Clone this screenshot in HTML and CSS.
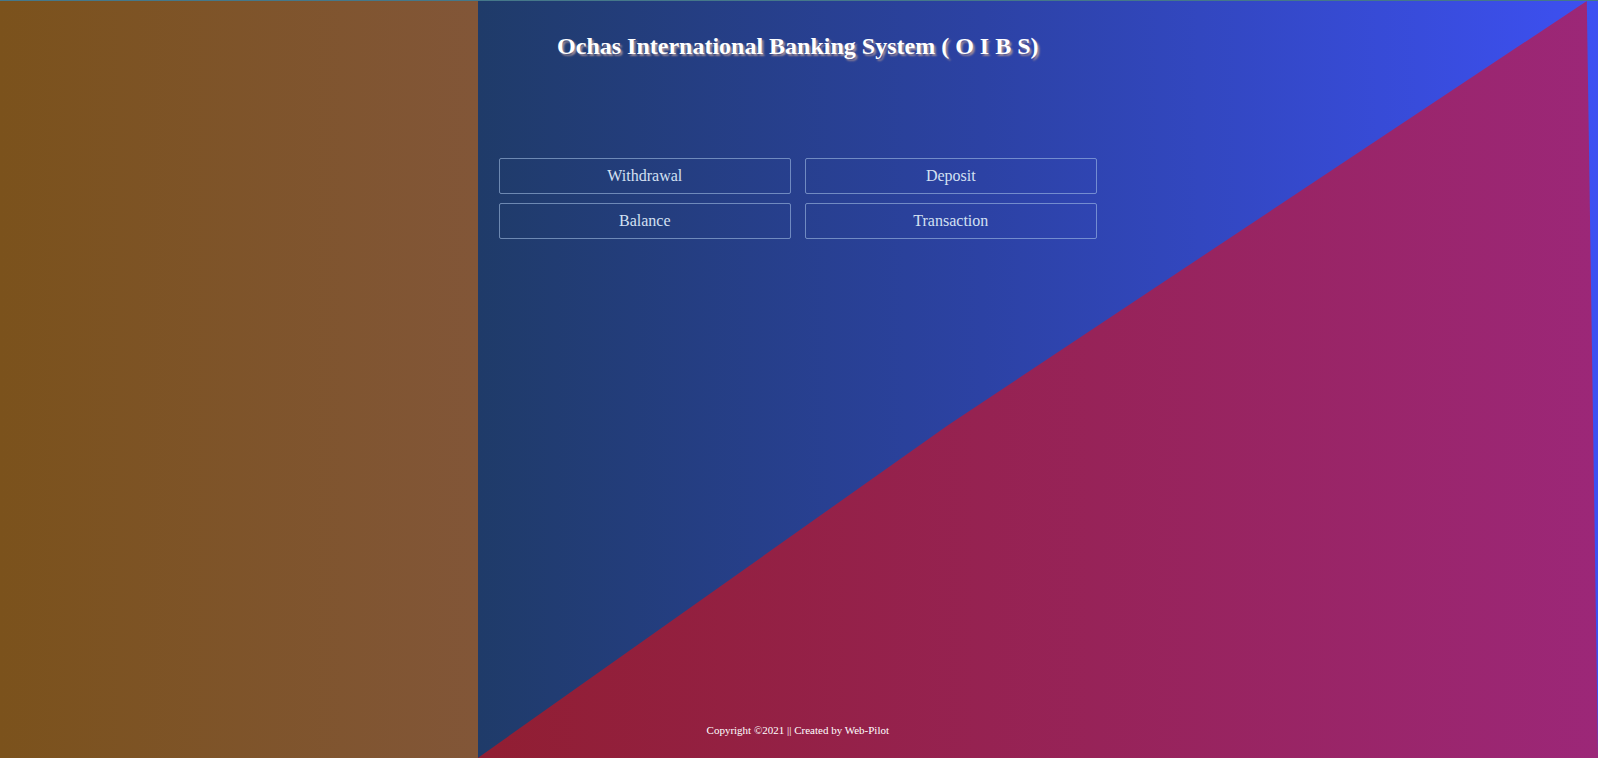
FILE: index.html
```html
<!DOCTYPE html>
<html lang="en">
<head>
<meta charset="utf-8">
<meta name="viewport" content="width=device-width, initial-scale=1">
<title>Ochas International Banking System</title>
<link rel="stylesheet" href="styles.css">
</head>
<body>
<div class="page">
  <aside class="side"></aside>
  <main class="main">
    <div class="content">
      <h1 class="title">Ochas International Banking System ( O I B S)</h1>
      <nav class="menu">
        <button class="menu-button" type="button">Withdrawal</button>
        <button class="menu-button" type="button">Deposit</button>
        <button class="menu-button" type="button">Balance</button>
        <button class="menu-button" type="button">Transaction</button>
      </nav>
      <footer class="footer">Copyright ©2021 || Created by Web-Pilot</footer>
    </div>
  </main>
</div>
</body>
</html>
```
FILE: styles.css
```css
* {
  box-sizing: border-box;
}

body {
  margin: 0;
  font-family: "Liberation Serif", "Times New Roman", serif;
  color: #fff;
}

.page {
  display: grid;
  grid-template-columns: 29.9% 1fr;
  min-height: 100vh;
  border-top: 1px solid #45788a;
}

.side {
  background: linear-gradient(to right, #7b521c, #825638);
}

.main {
  display: flex;
  position: relative;
  background: linear-gradient(to right, #1f3b69, #2c42a4 45%, #3d50f2);
}

.main::before {
  content: "";
  position: absolute;
  inset: 0;
  background: linear-gradient(to right, #911e32, #9c2778);
  clip-path: polygon(0 100%, 42% 56%, 99% 0, 100% 100%);
}

.content {
  position: relative;
  display: flex;
  flex-direction: column;
  width: 100%;
  max-width: 640px;
  padding: 31px 21px 21px;
}

.title {
  margin: 0;
  font-size: 24px;
  line-height: 28px;
  text-align: center;
  text-shadow: 2px 2px 2px #a08c96;
}

.menu {
  display: grid;
  grid-template-columns: 1fr 1fr;
  gap: 9px 14px;
  margin-top: 98px;
}

.menu-button {
  height: 36px;
  padding: 0;
  border: 1px solid rgba(173, 200, 235, 0.55);
  border-radius: 2px;
  background: transparent;
  color: #d3e0f2;
  font-family: inherit;
  font-size: 16px;
}

.footer {
  margin-top: auto;
  font-size: 11px;
  line-height: 14px;
  text-align: center;
}
```
